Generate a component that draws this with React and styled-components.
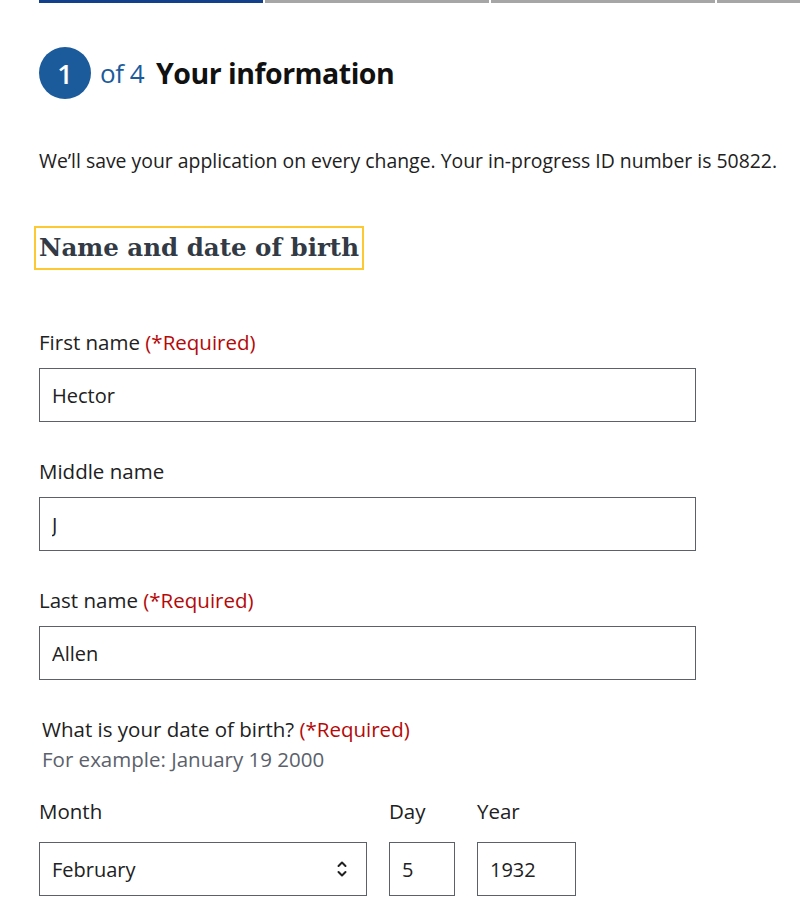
import React from "react";
import styled, { createGlobalStyle } from "styled-components";

const GlobalStyle = createGlobalStyle`
  html, body {
    margin: 0;
    padding: 0;
    background: #fff;
    overflow-x: hidden;
  }
  body {
    font-family: "Source Sans Pro", "Open Sans", "Noto Sans", sans-serif;
    color: #212121;
  }
`;

const Page = styled.div`
  padding: 0 0 40px 39px;
`;

const Progress = styled.div`
  display: flex;
  gap: 2px;
  width: 902px;
`;

const Segment = styled.div`
  flex: 1;
  height: 3px;
  background: ${(p) => (p.active ? "#12408a" : "#a6a6a6")};
`;

const StepHeader = styled.h2`
  display: flex;
  align-items: center;
  margin: 44px 0 0;
  font-weight: 400;
`;

const StepCircle = styled.span`
  display: inline-flex;
  align-items: center;
  justify-content: center;
  width: 52px;
  height: 52px;
  border-radius: 50%;
  background: #1b5b9c;
  color: #fff;
  font-size: 27px;
  font-weight: 600;
`;

const StepOf = styled.span`
  margin-left: 9px;
  color: #1b5b9c;
  font-size: 26px;
  letter-spacing: -0.5px;
`;

const StepTitle = styled.span`
  margin-left: 12px;
  color: #111;
  font-size: 28.5px;
  font-weight: 700;
  letter-spacing: -0.5px;
`;

const Intro = styled.p`
  margin: 48px 0 0;
  font-size: 19.4px;
  line-height: 1.4;
`;

const SectionTitle = styled.h3`
  display: inline-block;
  margin: 52px 0 0 -5px;
  padding: 3px 3px;
  border: 2px solid #fcc934;
  font-family: "DejaVu Serif", serif;
  font-size: 24.5px;
  font-weight: 700;
  color: #323a45;
  line-height: 34px;
`;

const Field = styled.div`
  margin-top: ${(p) => p.top || 36}px;
`;

const Label = styled.label`
  display: block;
  font-size: 20.5px;
  line-height: 26px;
  margin-bottom: ${(p) => p.gap || 13}px;
`;

const Required = styled.span`
  color: #b50909;
`;

const TextInput = styled.input`
  box-sizing: border-box;
  display: block;
  width: ${(p) => p.width || 657}px;
  height: 54px;
  margin: 0;
  padding: 0 12px;
  border: 1px solid #5b616b;
  border-radius: 0;
  font-family: inherit;
  font-size: 20px;
  color: #212121;
  background: #fff;
  outline: none;
`;

const Fieldset = styled.fieldset`
  margin: 34px 0 0;
  padding: 0;
  border: none;
`;

const Legend = styled.legend`
  padding: 0 0 0 3px;
  font-size: 20.5px;
  line-height: 30px;
`;

const Hint = styled.span`
  display: block;
  color: #5b616b;
`;

const DateRow = styled.div`
  display: flex;
  align-items: flex-end;
  gap: 22px;
  margin-top: 24px;
`;

const DatePart = styled.div`
  display: flex;
  flex-direction: column;
`;

const SelectBox = styled.div`
  box-sizing: border-box;
  width: 328px;
  height: 54px;
  border: 1px solid #5b616b;
  display: flex;
  align-items: center;
  justify-content: space-between;
  padding: 0 18px 0 12px;
  font-size: 20px;
`;

const Chevrons = () => (
  <svg width="12" height="20" viewBox="0 0 12 20" fill="none" stroke="#212121" strokeWidth="2" strokeLinecap="round" strokeLinejoin="round">
    <path d="M2.5 7 L6 3.5 L9.5 7" />
    <path d="M2.5 13 L6 16.5 L9.5 13" />
  </svg>
);

export default function App() {
  return (
    <>
      <GlobalStyle />
      <Page>
        <Progress>
          <Segment active />
          <Segment />
          <Segment />
          <Segment />
        </Progress>

        <StepHeader>
          <StepCircle>1</StepCircle>
          <StepOf>of 4</StepOf>
          <StepTitle>Your information</StepTitle>
        </StepHeader>

        <Intro>
          We’ll save your application on every change. Your in-progress ID number is 50822.
        </Intro>

        <SectionTitle>Name and date of birth</SectionTitle>

        <Field top={59}>
          <Label>
            First name <Required>(*Required)</Required>
          </Label>
          <TextInput defaultValue="Hector" />
        </Field>

        <Field>
          <Label>Middle name</Label>
          <TextInput defaultValue="J" />
        </Field>

        <Field>
          <Label>
            Last name <Required>(*Required)</Required>
          </Label>
          <TextInput defaultValue="Allen" />
        </Field>

        <Fieldset>
          <Legend>
            What is your date of birth? <Required>(*Required)</Required>
            <Hint>For example: January 19 2000</Hint>
          </Legend>
          <DateRow>
            <DatePart>
              <Label gap={18}>Month</Label>
              <SelectBox>
                February
                <Chevrons />
              </SelectBox>
            </DatePart>
            <DatePart>
              <Label gap={18}>Day</Label>
              <TextInput width={66} defaultValue="5" />
            </DatePart>
            <DatePart>
              <Label gap={18}>Year</Label>
              <TextInput width={99} defaultValue="1932" />
            </DatePart>
          </DateRow>
        </Fieldset>
      </Page>
    </>
  );
}
